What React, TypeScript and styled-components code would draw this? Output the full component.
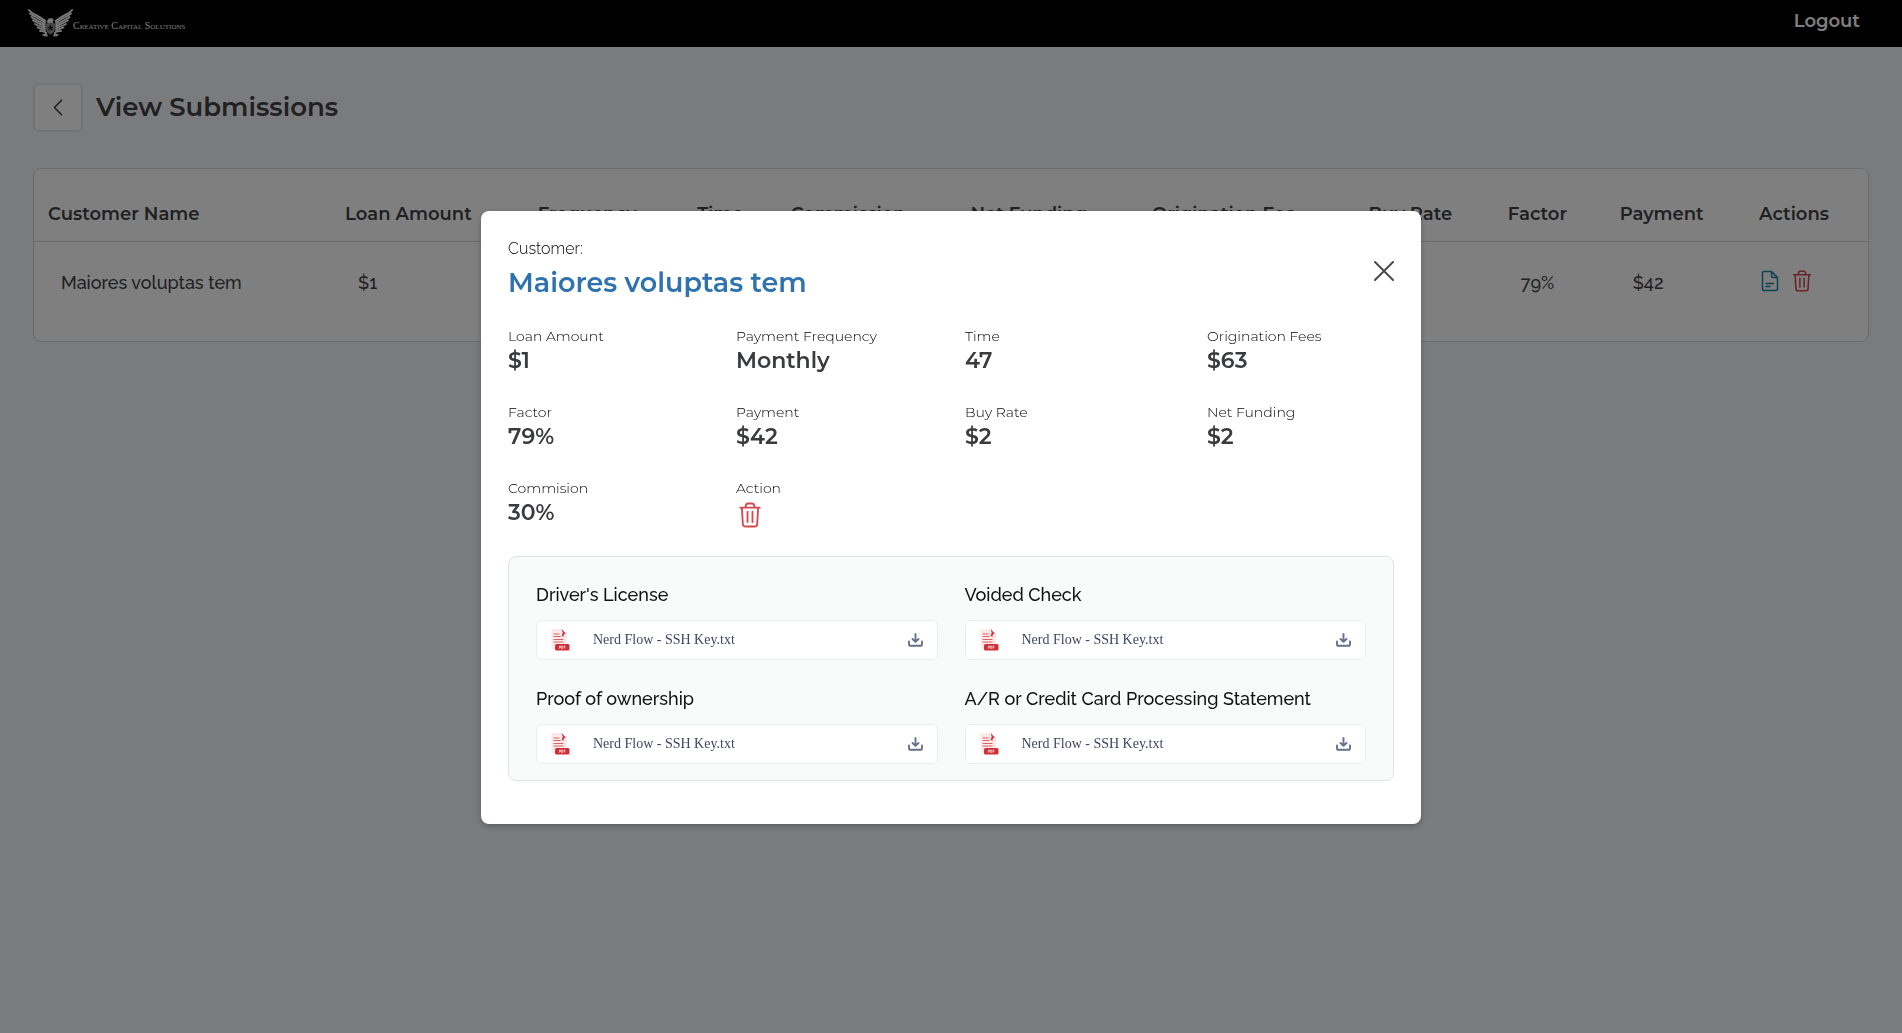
import React from "react";
import styled, { createGlobalStyle } from "styled-components";

const display = `Montserrat, Inter, "Liberation Sans", sans-serif`;
const body = `Raleway, "Open Sans", "Liberation Sans", sans-serif`;
const serif = `"Liberation Serif", serif`;

const GlobalStyle = createGlobalStyle`
  *, *::before, *::after { box-sizing: border-box; }
  body { margin: 0; background: #f5f6f8; color: #404145; font-family: ${body}; }
  button { padding: 0; border: 0; background: none; color: inherit; font: inherit; cursor: pointer; }
  h1, h2, h3, p, dl, dt, dd { margin: 0; }
  svg { display: block; }
`;

const Page = styled.div`
  min-height: 100vh;
`;

const TopBar = styled.header`
  display: flex;
  align-items: center;
  justify-content: space-between;
  height: 47px;
  padding: 0 42px 0 28px;
  background: #000;
`;

const Brand = styled.a`
  display: flex;
  align-items: center;
  color: #f4f4f4;
  font: 10px/14px ${serif};
  font-variant: small-caps;
  text-decoration: none;
`;

const BrandName = styled.span`
  padding-top: 4px;
`;

const Logout = styled.button`
  padding-bottom: 6px;
  color: #fff;
  font-family: ${display};
  font-size: 18px;
  font-weight: 600;
  line-height: 24px;
`;

const Main = styled.main`
  padding: 36px 33px;
`;

const TitleRow = styled.div`
  display: flex;
  align-items: center;
  gap: 13px;
  margin-bottom: 36px;
`;

const BackButton = styled.button`
  display: grid;
  place-items: center;
  width: 50px;
  height: 49px;
  border: 2px solid #e6e6e8;
  border-radius: 6px;
  background: #fff;
`;

const Title = styled.h1`
  padding-bottom: 2px;
  font-family: ${display};
  font-size: 26px;
  font-weight: 600;
  line-height: 36px;
`;

const Card = styled.section`
  overflow: hidden;
  border: 1px solid #d3d6da;
  border-radius: 8px;
  background: #fff;
`;

const Table = styled.table`
  width: 100%;
  table-layout: fixed;
  border-collapse: collapse;
  text-align: left;
  white-space: nowrap;
`;

const Col = styled.col<{ $share: number }>`
  width: ${(p) => p.$share}%;
`;

const Th = styled.th`
  padding: 33px 0 15px 14px;
  border-bottom: 1px solid #d3d6da;
  font-family: ${display};
  font-size: 18px;
  font-weight: 600;
  line-height: 24px;
`;

const Td = styled.td`
  padding: 29px 0 46px 27px;
  font-size: 18px;
  font-weight: 500;
  line-height: 24px;
`;

const ActionsCell = styled(Td)`
  padding: 28px 0 0 14px;
  vertical-align: top;
`;

const RowActions = styled.div`
  display: flex;
  gap: 10px;
`;

const IconButton = styled.button<{ $color: string }>`
  display: grid;
  place-items: center;
  color: ${(p) => p.$color};
`;

const FactButton = styled(IconButton)`
  padding: 3px 0 0 1px;
`;

const Backdrop = styled.div`
  position: fixed;
  inset: 0;
  display: flex;
  align-items: center;
  justify-content: center;
  padding-top: 2px;
  background: rgba(0, 0, 0, 0.5);
`;

const Modal = styled.div`
  width: 940px;
  max-width: 100%;
  padding: 26px 27px 43px;
  border-radius: 8px;
  background: #fff;
  box-shadow: 0 2px 6px rgba(0, 0, 0, 0.25);
`;

const ModalHead = styled.div`
  display: flex;
  align-items: center;
  justify-content: space-between;
  margin-bottom: 21px;
`;

const CustomerLabel = styled.p`
  color: #000;
  font-size: 16px;
  font-weight: 300;
  line-height: 24px;
`;

const CustomerName = styled.h2`
  color: #2f72b0;
  font-family: ${display};
  font-size: 27px;
  font-weight: 600;
  line-height: 44px;
`;

const Facts = styled.dl`
  display: grid;
  grid-template-columns: 228fr 229fr 242fr 187fr;
  row-gap: 27px;
  margin-bottom: 28px;
  font-family: ${display};
`;

const FactLabel = styled.dt`
  color: #000;
  font-size: 14px;
  font-weight: 300;
  line-height: 20px;
`;

const FactValue = styled.dd`
  padding-top: 1px;
  color: #3a3b3f;
  font-size: 22px;
  font-weight: 600;
  line-height: 28px;
`;

const Files = styled.section`
  display: grid;
  grid-template-columns: 1fr 1fr;
  gap: 25px 27px;
  padding: 24px 27px 16px;
  border: 1px solid #dfe3e2;
  border-radius: 8px;
  background: #f9fbfa;
`;

const FileTitle = styled.h3`
  margin-bottom: 11px;
  color: #111;
  font-size: 18px;
  font-weight: 500;
  line-height: 28px;
`;

const FileRow = styled.div`
  display: flex;
  align-items: center;
  height: 40px;
  padding: 0 14px;
  border: 1px solid #eceeee;
  border-radius: 6px;
  background: #fff;
`;

const FileName = styled.span`
  flex: 1;
  padding: 0 0 1px 23px;
  color: #3b4763;
  font: 14px/20px ${serif};
`;

const Eagle = () => {
  const wing = (
    <g fill="none" stroke="currentColor" strokeWidth="1.8" strokeLinecap="round">
      <path d="M.9 1C4 5 11 6.500 17.500 12" />
      <path d="M2 4.500C6 8 12 9 17 14" />
      <path d="M3.500 8C7 11 12 12 17 16" />
      <path d="M5 11.500C9 14 13 14.500 17 18" />
      <path d="M7 15C10 17 13 17 17 19.500" />
      <path d="M9.500 18.500C12 19.500 14 19.500 17 21.500" />
      <path d="M12 22C14 22 15.500 22 18 23.500" />
    </g>
  );
  return (
    <svg width="45" height="29" viewBox="0 0 45 29" aria-hidden="true">
      {wing}
      <g transform="matrix(-1 0 0 1 45 0)">{wing}</g>
      <path fill="currentColor" d="M19 12.500 20.500 9.500 24.500 9.200 26 11.500 24.500 11.800 25.500 14H19.500Z" />
      <path fill="#8d8d8d" d="M18 14.500 22.500 13.500 27 14.500V20Q26.500 23.500 22.500 25.500 18.500 23.500 18 20Z" />
      <path fill="#222" d="m22.500 15.500 1 2.200 2.300.2-1.800 1.500.6 2.300-2.100-1.200-2.100 1.200.6-2.300-1.800-1.500 2.300-.2Z" />
      <path fill="none" stroke="currentColor" strokeWidth="1.500" d="m18.500 23.500-2 4m.5-2-2.500.5m4-1 .5 2.500m7.500-4 2 4m-.5-2 2.500.5m-4-1-.5 2.500" />
    </svg>
  );
};

const ChevronIcon = () => (
  <svg width="10" height="17" viewBox="0 0 10 17" fill="none" stroke="currentColor" strokeWidth="1.600" aria-hidden="true">
    <path d="M9 .8 1.500 8.500 9 16.200" />
  </svg>
);

const CloseIcon = () => (
  <svg width="20" height="20" viewBox="0 0 20 20" fill="none" stroke="#4a4b4f" strokeWidth="2" strokeLinecap="round" aria-hidden="true">
    <path d="m1 1 18 18M19 1 1 19" />
  </svg>
);

const TrashIcon = ({ size }: { size: number }) => (
  <svg width={size} height={size} viewBox="0 0 24 24" fill="none" stroke="currentColor" strokeWidth="1.700" strokeLinecap="round" strokeLinejoin="round" aria-hidden="true">
    <path d="M3 5.200h18M7.800 5C8 2.200 8.600 1.400 10 1.400h4c1.400 0 2 .8 2.200 3.600M4.500 5.200l.9 15.400c.1 1.500.7 2 2.100 2h9c1.400 0 2-.5 2.100-2l.9-15.400M9.700 9v9.500M14.300 9v9.500" />
  </svg>
);

const DocumentIcon = () => (
  <svg width="22" height="22" viewBox="0 0 22 22" fill="none" stroke="currentColor" strokeWidth="1.500" strokeLinecap="round" strokeLinejoin="round" aria-hidden="true">
    <path d="M12.500 1.500H5Q3.500 1.500 3.500 3v16q0 1.500 1.500 1.500h12q1.500 0 1.500-1.500V7.500ZM12.500 1.500V6q0 1.500 1.500 1.500h4.500M7 13.500h7.500M7 16.500h4" />
  </svg>
);

const PdfIcon = () => (
  <svg width="19" height="22" viewBox="0 0 19 22" aria-hidden="true">
    <path fill="#fae9e9" d="M2 0h9l5 5v15H2Q.5 20 .5 18V2Q.5 0 2 0Z" />
    <path fill="#d13438" d="m10.500 0 4.500 4.700-2 .3-.7 3-1.800-1.500 1.300-2.500Z" />
    <path stroke="#dc6366" strokeWidth="1.200" d="M2.500 5h6M2.500 7.500h7M2.500 10.500h10M2.500 13h10" />
    <rect x="4" y="15" width="14.500" height="6.500" rx="1.500" fill="#cf3035" />
    <path fill="none" stroke="#f6cfd0" strokeWidth=".8" d="M8.500 19.700v-2.700h1.200v1.500H8.500m2.200-1.500v2.700h.6q1-1.300 0-2.700Zm2.300 2.700v-2.700h1.500m-1.500 1.300h1.200" />
  </svg>
);

const DownloadIcon = () => (
  <svg width="15" height="14" viewBox="0 0 15 14" fill="none" stroke="#66718a" strokeWidth="1.900" strokeLinecap="round" strokeLinejoin="round" aria-hidden="true">
    <path d="M7.500 1v7.500M4.500 6l3 2.800 3-2.800M1 8.500v2.700q0 1.600 1.600 1.600h9.800q1.600 0 1.600-1.600V8.500" />
  </svg>
);

const columns = [
  { name: "Customer Name", share: 16.2, value: "Maiores voluptas tem" },
  { name: "Loan Amount", share: 10.5, value: "$1" },
  { name: "Frequency", share: 8.7, value: "Monthly" },
  { name: "Time", share: 5.1, value: "47" },
  { name: "Commission", share: 9.8, value: "30%" },
  { name: "Net Funding", share: 9.9, value: "$2" },
  { name: "Origination Fee", share: 11.8, value: "$63" },
  { name: "Buy Rate", share: 7.6, value: "$2" },
  { name: "Factor", share: 6.1, value: "79%" },
  { name: "Payment", share: 7.6, value: "$42" },
];

const facts = [
  ["Loan Amount", "$1"],
  ["Payment Frequency", "Monthly"],
  ["Time", "47"],
  ["Origination Fees", "$63"],
  ["Factor", "79%"],
  ["Payment", "$42"],
  ["Buy Rate", "$2"],
  ["Net Funding", "$2"],
  ["Commision", "30%"],
];

const files = ["Driver's License", "Voided Check", "Proof of ownership", "A/R or Credit Card Processing Statement"];

const red = "#d5484d";

export default function App() {
  return (
    <Page>
      <GlobalStyle />
      <TopBar>
        <Brand href="#">
          <Eagle />
          <BrandName>Creative Capital Solutions</BrandName>
        </Brand>
        <Logout>Logout</Logout>
      </TopBar>
      <Main>
        <TitleRow>
          <BackButton aria-label="Back">
            <ChevronIcon />
          </BackButton>
          <Title>View Submissions</Title>
        </TitleRow>
        <Card>
          <Table>
            <colgroup>
              {columns.map((c) => (
                <Col key={c.name} $share={c.share} />
              ))}
              <Col $share={6.7} />
            </colgroup>
            <thead>
              <tr>
                {columns.map((c) => (
                  <Th key={c.name}>{c.name}</Th>
                ))}
                <Th>Actions</Th>
              </tr>
            </thead>
            <tbody>
              <tr>
                {columns.map((c) => (
                  <Td key={c.name}>{c.value}</Td>
                ))}
                <ActionsCell>
                  <RowActions>
                    <IconButton $color="#1786a8" aria-label="View">
                      <DocumentIcon />
                    </IconButton>
                    <IconButton $color={red} aria-label="Delete">
                      <TrashIcon size={22} />
                    </IconButton>
                  </RowActions>
                </ActionsCell>
              </tr>
            </tbody>
          </Table>
        </Card>
      </Main>
      <Backdrop>
        <Modal role="dialog" aria-modal="true" aria-labelledby="customer-name">
          <ModalHead>
            <div>
              <CustomerLabel>Customer:</CustomerLabel>
              <CustomerName id="customer-name">Maiores voluptas tem</CustomerName>
            </div>
            <IconButton $color="#4a4b4f" aria-label="Close">
              <CloseIcon />
            </IconButton>
          </ModalHead>
          <Facts>
            {facts.map(([label, value]) => (
              <div key={label}>
                <FactLabel>{label}</FactLabel>
                <FactValue>{value}</FactValue>
              </div>
            ))}
            <div>
              <FactLabel>Action</FactLabel>
              <FactValue>
                <FactButton $color={red} aria-label="Delete submission">
                  <TrashIcon size={26} />
                </FactButton>
              </FactValue>
            </div>
          </Facts>
          <Files>
            {files.map((title) => (
              <div key={title}>
                <FileTitle>{title}</FileTitle>
                <FileRow>
                  <PdfIcon />
                  <FileName>Nerd Flow - SSH Key.txt</FileName>
                  <IconButton $color="#66718a" aria-label={`Download ${title}`}>
                    <DownloadIcon />
                  </IconButton>
                </FileRow>
              </div>
            ))}
          </Files>
        </Modal>
      </Backdrop>
    </Page>
  );
}
